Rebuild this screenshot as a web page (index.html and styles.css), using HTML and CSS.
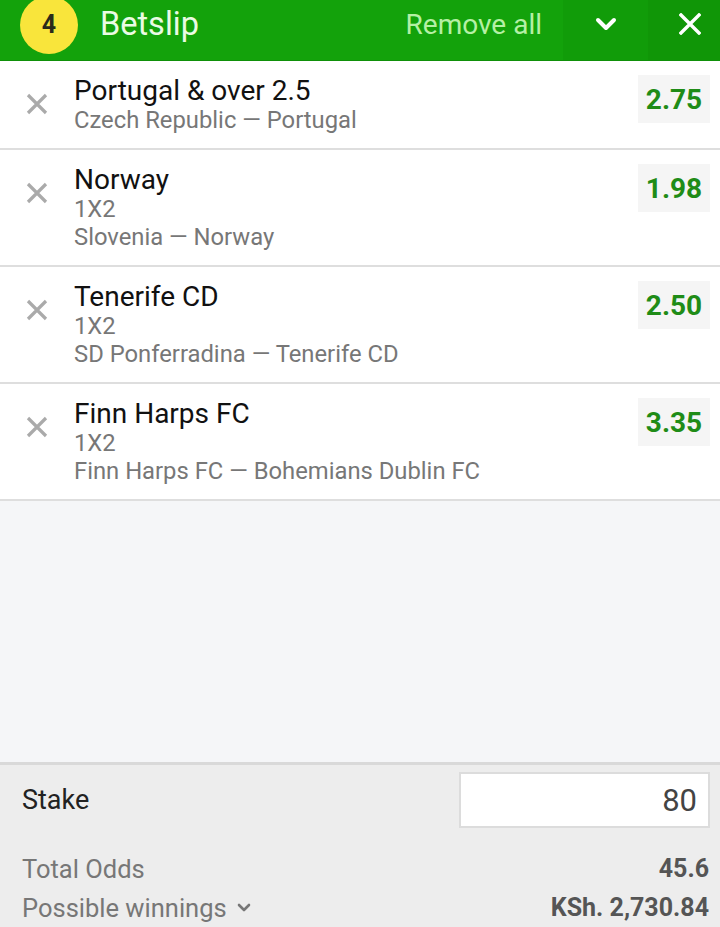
FILE: index.html
```html
<!DOCTYPE html>
<html>
<head>
<meta charset="utf-8">
<link rel="stylesheet" href="styles.css">
</head>
<body>
<div class="app">
  <header class="bar">
    <div class="count">4</div>
    <div class="title">Betslip</div>
    <div class="remove">Remove all</div>
    <div class="btn btn-chev">
      <svg width="22" height="14" viewBox="0 0 22 14"><path d="M3 3 L11 11 L19 3" fill="none" stroke="#fff" stroke-width="4" stroke-linecap="round" stroke-linejoin="round"/></svg>
    </div>
    <div class="btn btn-close">
      <svg width="22" height="22" viewBox="0 0 22 22"><path d="M2 2 L20 20 M20 2 L2 20" fill="none" stroke="#fff" stroke-width="3.4" stroke-linecap="square"/></svg>
    </div>
  </header>

  <div class="list">
    <div class="row">
      <div class="x"><svg width="22" height="22" viewBox="0 0 22 22"><path d="M2 2 L20 20 M20 2 L2 20" stroke="#aaa" stroke-width="3.2"/></svg></div>
      <div class="info">
        <div class="name">Portugal &amp; over 2.5</div>
        <div class="sub">Czech Republic — Portugal</div>
      </div>
      <div class="odd">2.75</div>
    </div>
    <div class="row">
      <div class="x"><svg width="22" height="22" viewBox="0 0 22 22"><path d="M2 2 L20 20 M20 2 L2 20" stroke="#aaa" stroke-width="3.2"/></svg></div>
      <div class="info">
        <div class="name">Norway</div>
        <div class="sub">1X2</div>
        <div class="sub">Slovenia — Norway</div>
      </div>
      <div class="odd">1.98</div>
    </div>
    <div class="row">
      <div class="x"><svg width="22" height="22" viewBox="0 0 22 22"><path d="M2 2 L20 20 M20 2 L2 20" stroke="#aaa" stroke-width="3.2"/></svg></div>
      <div class="info">
        <div class="name">Tenerife CD</div>
        <div class="sub">1X2</div>
        <div class="sub">SD Ponferradina — Tenerife CD</div>
      </div>
      <div class="odd">2.50</div>
    </div>
    <div class="row">
      <div class="x"><svg width="22" height="22" viewBox="0 0 22 22"><path d="M2 2 L20 20 M20 2 L2 20" stroke="#aaa" stroke-width="3.2"/></svg></div>
      <div class="info">
        <div class="name">Finn Harps FC</div>
        <div class="sub">1X2</div>
        <div class="sub">Finn Harps FC — Bohemians Dublin FC</div>
      </div>
      <div class="odd">3.35</div>
    </div>
  </div>

  <div class="empty"></div>

  <footer class="foot">
    <div class="stake-row">
      <div class="stake-label">Stake</div>
      <div class="stake-input">80</div>
    </div>
    <div class="sum-row">
      <div class="sum-label">Total Odds</div>
      <div class="sum-val">45.6</div>
    </div>
    <div class="sum-row">
      <div class="sum-label">Possible winnings
        <svg class="mini" width="14" height="10" viewBox="0 0 14 10"><path d="M2 2 L7 7 L12 2" fill="none" stroke="#777" stroke-width="2.6" stroke-linecap="round" stroke-linejoin="round"/></svg>
      </div>
      <div class="sum-val">KSh. 2,730.84</div>
    </div>
  </footer>
</div>
</body>
</html>
```

FILE: styles.css
```css
* { box-sizing: border-box; }
html, body { margin: 0; padding: 0; }
body {
  font-family: Roboto, "Noto Sans", sans-serif;
  background: #ededed;
  width: 720px;
  height: 927px;
  overflow: hidden;
}
.app {
  display: flex;
  flex-direction: column;
  height: 927px;
}
.bar {
  height: 61px;
  background: #13a20b;
  display: flex;
  align-items: center;
  border-bottom: 1px solid #0f9009;
  flex: none;
  overflow: hidden;
}
.count {
  width: 58px;
  height: 58px;
  border-radius: 50%;
  background: #f9e53b;
  color: #2a2a1a;
  font-weight: 700;
  font-size: 25px;
  display: flex;
  align-items: center;
  justify-content: center;
  margin-left: 20px;
  margin-top: -11px;
  flex: none;
}
.title {
  color: #eafbe4;
  font-size: 32.5px;
  margin-left: 22px;
  margin-top: -12px;
  flex: 1;
}
.remove {
  color: #b5f0a5;
  font-size: 28px;
  margin-top: -12px;
  margin-right: 21px;
}
.btn {
  height: 100%;
  display: flex;
  align-items: center;
  justify-content: center;
  padding-bottom: 12px;
}
.btn-chev {
  width: 85px;
  background: #119c09;
}
.btn-close {
  width: 72px;
  background: #109607;
  padding-left: 12px;
}
.list {
  background: #fff;
  flex: none;
}
.row {
  display: flex;
  align-items: flex-start;
  border-bottom: 2px solid #dedede;
  padding: 14px 10px 14px 0;
  background: #fff;
}
.x {
  width: 74px;
  display: flex;
  justify-content: center;
  padding-top: 18px;
  flex: none;
}
.info {
  flex: 1;
}
.name {
  font-size: 28px;
  color: #111;
  line-height: 31px;
}
.sub {
  font-size: 23.8px;
  color: #777;
  line-height: 28px;
}
.odd {
  background: #f5f5f5;
  color: #1f8c17;
  font-weight: 700;
  font-size: 28px;
  width: 72px;
  height: 48px;
  display: flex;
  align-items: center;
  justify-content: center;
}
.empty {
  flex: 1;
  background: #f5f6f8;
  border-bottom: 3px solid #d9d9d9;
}
.foot {
  flex: none;
  height: 162px;
  background: #ededed;
  padding: 7px 10px 0 22px;
}
.stake-row {
  display: flex;
  align-items: center;
  justify-content: space-between;
  height: 56px;
  margin-bottom: 21px;
}
.stake-label {
  font-size: 27px;
  color: #222;
}
.stake-input {
  width: 251px;
  height: 56px;
  background: #fff;
  border: 2px solid #dcdcdc;
  font-size: 31px;
  color: #444;
  text-align: right;
  padding: 8px 11px 0 0;
}
.sum-row {
  display: flex;
  justify-content: space-between;
  align-items: center;
  height: 39px;
  padding-right: 1px;
}
.sum-label {
  font-size: 25.5px;
  color: #777;
  display: flex;
  align-items: center;
  gap: 10px;
}
.sum-val {
  font-size: 25px;
  font-weight: 700;
  color: #555;
}
```
